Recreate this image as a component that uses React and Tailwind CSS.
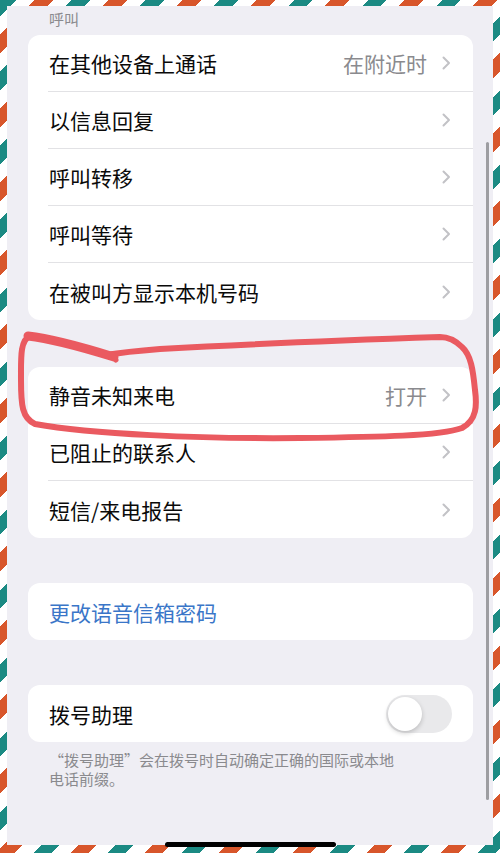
import React from "react";

function Chevron() {
  return (
    <svg width="9" height="14" viewBox="0 0 9 14" className="shrink-0">
      <path d="M1.5 1.5 L7 7 L1.5 12.5" fill="none" stroke="#c2c2c6" strokeWidth="2" strokeLinecap="round" strokeLinejoin="round" />
    </svg>
  );
}

function Row({ label, value, last }) {
  return (
    <div className="flex h-[57px] items-center">
      <div
        className={
          last
            ? "ml-[20px] flex h-full flex-1 items-center pl-[1px] pr-[22px]"
            : "ml-[20px] flex h-full flex-1 items-center border-b border-[#e2e2e5] pl-[1px] pr-[22px]"
        }
      >
        <span className="flex-1 text-[21px] leading-[28px] text-[#0a0a0a]">{label}</span>
        {value ? (
          <span className="mr-[15px] text-[21px] leading-[28px] text-[#8a8a8e]">{value}</span>
        ) : null}
        <Chevron />
      </div>
    </div>
  );
}

export default function App() {
  return (
    <div className="relative h-[853px] w-[500px] overflow-hidden bg-white pb-[8px] pl-[7px] pr-[7px] pt-[6px] font-['Noto_Sans_CJK_SC','Noto_Sans',sans-serif] [background-image:repeating-linear-gradient(135deg,#1b8a83_0px,#1b8a83_11.67px,#ffffff_11.67px,#ffffff_24.7px,#d8562b_24.7px,#d8562b_37.8px,#ffffff_37.8px,#ffffff_50.9px,#1b8a83_50.9px,#1b8a83_52.33px)]">
      <div className="flex h-full flex-col bg-[#efeef4] pl-[21px] pr-[20px]">
        <div className="h-[29px] pl-[21px] pt-[3px] text-[15px] leading-[20px] text-[#8a8a8e]">呼叫</div>

        <div className="overflow-hidden rounded-[12px] bg-white">
          <Row label="在其他设备上通话" value="在附近时" />
          <Row label="以信息回复" />
          <Row label="呼叫转移" />
          <Row label="呼叫等待" />
          <Row label="在被叫方显示本机号码" last />
        </div>

        <div className="mt-[47px] overflow-hidden rounded-[12px] bg-white">
          <Row label="静音未知来电" value="打开" />
          <Row label="已阻止的联系人" />
          <Row label="短信/来电报告" last />
        </div>

        <div className="mt-[45px] flex h-[57px] items-center rounded-[12px] bg-white pl-[21px]">
          <span className="text-[21px] leading-[28px] text-[#3a76c8]">更改语音信箱密码</span>
        </div>

        <div className="mt-[45px] flex h-[57px] items-center rounded-[12px] bg-white pl-[21px] pr-[21px]">
          <span className="flex-1 text-[21px] leading-[28px] text-[#0a0a0a]">拨号助理</span>
          <div className="h-[38px] w-[66px] rounded-full bg-[#e9e9eb] p-[2px]">
            <div className="h-[34px] w-[34px] rounded-full bg-white shadow-[0_2px_5px_rgba(0,0,0,0.2)]" />
          </div>
        </div>

        <div className="mt-[8px] pl-[21px] text-[15px] leading-[19px] text-[#8a8a8e]">
          “拨号助理”会在拨号时自动确定正确的国际或本地
          <br />
          电话前缀。
        </div>
      </div>

      <div className="absolute left-[486px] top-[142px] h-[658px] w-[3px] rounded-full bg-[#9d9da1]" />
      <div className="absolute left-[165px] top-[842px] h-[5px] w-[171px] rounded-full bg-black" />

      <svg className="pointer-events-none absolute left-0 top-0" width="500" height="853" viewBox="0 0 500 853">
        <g fill="none" stroke="#ea5a60" strokeLinecap="round" strokeLinejoin="round">
          <path
            strokeWidth="6"
            d="M30 336 C20 340, 21 358, 21 380 C21 405, 22 418, 35 424 C90 434, 200 439, 300 438 C380 437, 440 436, 462 428 C477 420, 477 405, 475 390 C473 370, 471 355, 462 347 C455 340, 448 337, 440 337 C380 339, 250 344, 160 349 C135 351, 118 353, 106 355"
          />
          <path strokeWidth="9" d="M28 336 C55 339, 85 348, 114 357" />
          <path strokeWidth="5" d="M112 354 L116 360" />
        </g>
      </svg>
    </div>
  );
}
